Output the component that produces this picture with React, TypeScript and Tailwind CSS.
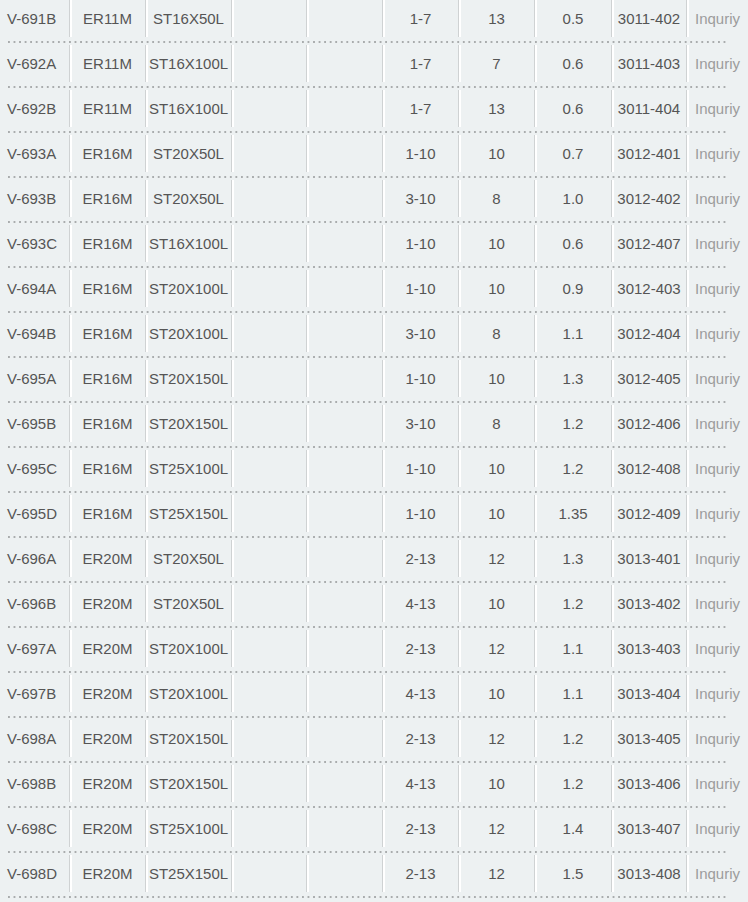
import React from "react";

const rows: string[][] = [
  ["V-691B", "ER11M", "ST16X50L", "1-7", "13", "0.5", "3011-402"],
  ["V-692A", "ER11M", "ST16X100L", "1-7", "7", "0.6", "3011-403"],
  ["V-692B", "ER11M", "ST16X100L", "1-7", "13", "0.6", "3011-404"],
  ["V-693A", "ER16M", "ST20X50L", "1-10", "10", "0.7", "3012-401"],
  ["V-693B", "ER16M", "ST20X50L", "3-10", "8", "1.0", "3012-402"],
  ["V-693C", "ER16M", "ST16X100L", "1-10", "10", "0.6", "3012-407"],
  ["V-694A", "ER16M", "ST20X100L", "1-10", "10", "0.9", "3012-403"],
  ["V-694B", "ER16M", "ST20X100L", "3-10", "8", "1.1", "3012-404"],
  ["V-695A", "ER16M", "ST20X150L", "1-10", "10", "1.3", "3012-405"],
  ["V-695B", "ER16M", "ST20X150L", "3-10", "8", "1.2", "3012-406"],
  ["V-695C", "ER16M", "ST25X100L", "1-10", "10", "1.2", "3012-408"],
  ["V-695D", "ER16M", "ST25X150L", "1-10", "10", "1.35", "3012-409"],
  ["V-696A", "ER20M", "ST20X50L", "2-13", "12", "1.3", "3013-401"],
  ["V-696B", "ER20M", "ST20X50L", "4-13", "10", "1.2", "3013-402"],
  ["V-697A", "ER20M", "ST20X100L", "2-13", "12", "1.1", "3013-403"],
  ["V-697B", "ER20M", "ST20X100L", "4-13", "10", "1.1", "3013-404"],
  ["V-698A", "ER20M", "ST20X150L", "2-13", "12", "1.2", "3013-405"],
  ["V-698B", "ER20M", "ST20X150L", "4-13", "10", "1.2", "3013-406"],
  ["V-698C", "ER20M", "ST25X100L", "2-13", "12", "1.4", "3013-407"],
  ["V-698D", "ER20M", "ST25X150L", "2-13", "12", "1.5", "3013-408"],
];

const sep = "border-l border-[#cfd2d3] shadow-[inset_2px_0_0_#ffffff]";

function Row({ r }: { r: string[] }) {
  return (
    <div className="flex flex-col">
      <div className="flex h-[37px] items-center text-[15px] text-[#555555]">
        <div className="w-[69px] h-full flex items-center pt-[2px] pl-[7px]">{r[0]}</div>
        <div className={`w-[76px] h-full flex items-center justify-center pt-[2px] ${sep}`}>{r[1]}</div>
        <div className={`w-[86px] h-full flex items-center justify-center pt-[2px] ${sep}`}>{r[2]}</div>
        <div className={`w-[75px] h-full flex items-center justify-center pt-[2px] ${sep}`}></div>
        <div className={`w-[76px] h-full flex items-center justify-center pt-[2px] ${sep}`}></div>
        <div className={`w-[76px] h-full flex items-center justify-center pt-[2px] ${sep}`}>{r[3]}</div>
        <div className={`w-[76px] h-full flex items-center justify-center pt-[2px] ${sep}`}>{r[4]}</div>
        <div className={`w-[77px] h-full flex items-center justify-center pt-[2px] ${sep}`}>{r[5]}</div>
        <div className={`w-[75px] h-full flex items-center justify-center pt-[2px] ${sep}`}>{r[6]}</div>
        <div className={`w-[62px] h-full flex items-center justify-center pt-[2px] text-[#9c9c9c] ${sep}`}>Inquriy</div>
      </div>
      <div className="mt-[4px] mb-[2px] ml-[8px] w-[719px] h-[2px] bg-[linear-gradient(to_right,#a9acad_2px,transparent_2px)] bg-[length:5.55px_2px]" />
    </div>
  );
}

export default function App() {
  return (
    <div
      className="min-h-screen w-[748px] bg-[#edf1f2] overflow-hidden"
      style={{ fontFamily: '"Liberation Sans", Arial, sans-serif' }}
    >
      {rows.map((r) => (
        <Row key={r[0]} r={r} />
      ))}
    </div>
  );
}
